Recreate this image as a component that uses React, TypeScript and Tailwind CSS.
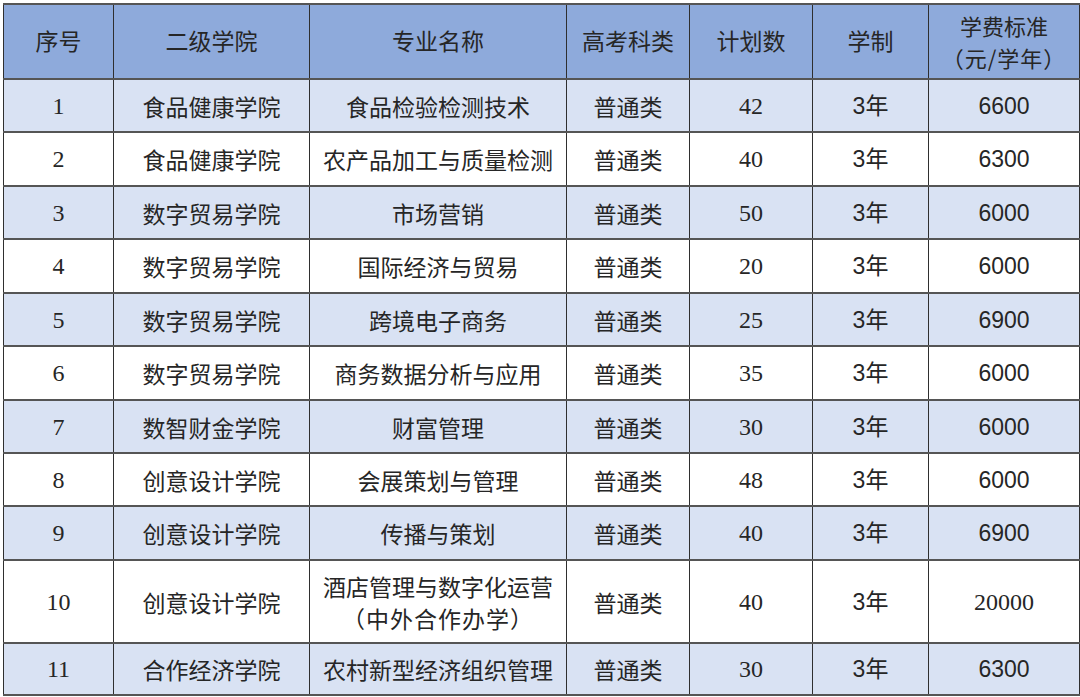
import React from "react";

type Row = { id: string; college: string; major: React.ReactNode; type: string; plan: string; years: string; fee: string; h: string; feeSerif?: boolean };

const rows: Row[] = [
  { id: "1", college: "食品健康学院", major: "食品检验检测技术", type: "普通类", plan: "42", years: "3年", fee: "6600", h: "h-[53px]" },
  { id: "2", college: "食品健康学院", major: "农产品加工与质量检测", type: "普通类", plan: "40", years: "3年", fee: "6300", h: "h-[54px]" },
  { id: "3", college: "数字贸易学院", major: "市场营销", type: "普通类", plan: "50", years: "3年", fee: "6000", h: "h-[53px]" },
  { id: "4", college: "数字贸易学院", major: "国际经济与贸易", type: "普通类", plan: "20", years: "3年", fee: "6000", h: "h-[54px]" },
  { id: "5", college: "数字贸易学院", major: "跨境电子商务", type: "普通类", plan: "25", years: "3年", fee: "6900", h: "h-[53px]" },
  { id: "6", college: "数字贸易学院", major: "商务数据分析与应用", type: "普通类", plan: "35", years: "3年", fee: "6000", h: "h-[54px]" },
  { id: "7", college: "数智财金学院", major: "财富管理", type: "普通类", plan: "30", years: "3年", fee: "6000", h: "h-[53px]" },
  { id: "8", college: "创意设计学院", major: "会展策划与管理", type: "普通类", plan: "48", years: "3年", fee: "6000", h: "h-[53px]" },
  { id: "9", college: "创意设计学院", major: "传播与策划", type: "普通类", plan: "40", years: "3年", fee: "6900", h: "h-[54px]" },
  {
    id: "10",
    college: "创意设计学院",
    major: (
      <>
        <div>酒店管理与数字化运营</div>
        <div className="tracking-[1px]">（中外合作办学）</div>
      </>
    ),
    type: "普通类",
    plan: "40",
    years: "3年",
    fee: "20000",
    h: "h-[83px]",
    feeSerif: true,
  },
  { id: "11", college: "合作经济学院", major: "农村新型经济组织管理", type: "普通类", plan: "30", years: "3年", fee: "6300", h: "h-[52px]" },
];

const serif = "font-['Liberation_Serif','Noto_Sans_CJK_SC',serif] text-[24px]";
const sans = "font-['Liberation_Sans','Noto_Sans_CJK_SC',sans-serif] text-[23px]";
const cjk = "font-['Noto_Sans_CJK_SC',sans-serif] text-[23px]";

const cell = "border-x border-x-[#2f2f2f] border-y-2 border-y-[#555555] text-center align-middle p-0";

export default function App() {
  return (
    <div className="bg-white w-[1080px] h-[697px] pl-[3px] pt-[3px]">
      <table className="border-collapse table-fixed w-[1076px] leading-[28px] text-[#262626]">
        <colgroup>
          <col className="w-[110px]" />
          <col className="w-[196px]" />
          <col className="w-[257px]" />
          <col className="w-[123px]" />
          <col className="w-[123px]" />
          <col className="w-[116px]" />
          <col className="w-[151px]" />
        </colgroup>
        <thead>
          <tr className="h-[75px] bg-[#8eaadb]">
            <th className={`${cell} ${cjk} font-normal pb-[4px]`}>序号</th>
            <th className={`${cell} ${cjk} font-normal pb-[4px]`}>二级学院</th>
            <th className={`${cell} ${cjk} font-normal pb-[4px]`}>专业名称</th>
            <th className={`${cell} ${cjk} font-normal pb-[4px]`}>高考科类</th>
            <th className={`${cell} ${cjk} font-normal pb-[4px]`}>计划数</th>
            <th className={`${cell} ${cjk} font-normal pb-[4px]`}>学制</th>
            <th className={`${cell} font-['Noto_Sans_CJK_SC',sans-serif] text-[22px] font-normal leading-[32px] pb-[2px]`}>
              <div>学费标准</div>
              <div className="tracking-[1px]">（元/学年）</div>
            </th>
          </tr>
        </thead>
        <tbody>
          {rows.map((r, i) => (
            <tr key={r.id} className={`${r.h} ${i % 2 === 0 ? "bg-[#d9e2f3]" : "bg-white"}`}>
              <td className={`${cell} ${serif}`}>{r.id}</td>
              <td className={`${cell} ${cjk}`}>{r.college}</td>
              <td className={`${cell} ${cjk} leading-[32px]`}>{r.major}</td>
              <td className={`${cell} ${cjk}`}>{r.type}</td>
              <td className={`${cell} ${serif}`}>{r.plan}</td>
              <td className={`${cell} ${sans}`}>{r.years}</td>
              <td className={`${cell} ${r.feeSerif ? serif : sans}`}>{r.fee}</td>
            </tr>
          ))}
        </tbody>
      </table>
    </div>
  );
}
